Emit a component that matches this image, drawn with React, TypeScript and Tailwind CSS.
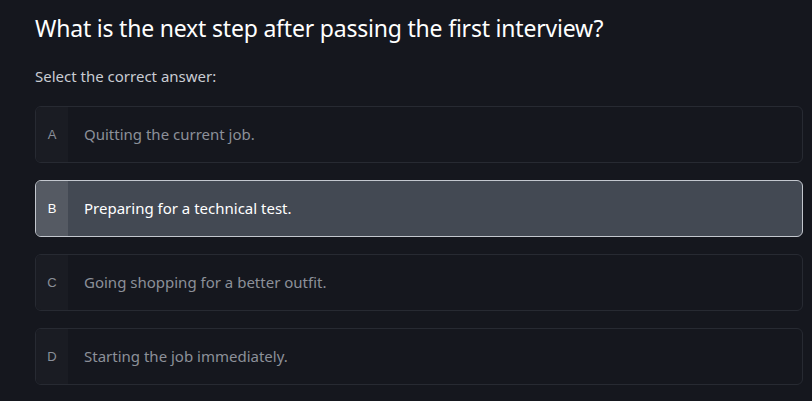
import React from "react";

const options = [
  { key: "A", text: "Quitting the current job." },
  { key: "B", text: "Preparing for a technical test." },
  { key: "C", text: "Going shopping for a better outfit." },
  { key: "D", text: "Starting the job immediately." },
];

function App() {
  const selected = "B";

  return (
    <div className="min-h-screen w-full bg-[#15171e] pl-[35px] pr-[9px] pt-[13px] font-['Noto_Sans',sans-serif]">
      <h1 className="text-[23px] leading-[30px] text-white tracking-[-0.2px]">
        What is the next step after passing the first interview?
      </h1>
      <p className="mt-[23px] text-[15px] leading-[20px] text-[#c9ccd3]">Select the correct answer:</p>

      <div className="mt-[20px] flex flex-col gap-[17px]">
        {options.map((o) => {
          const active = o.key === selected;
          return (
            <div
              key={o.key}
              className={
                active
                  ? "flex h-[57px] overflow-hidden rounded-[6px] border border-[#c3c7ce] bg-[#434953]"
                  : "flex h-[57px] overflow-hidden rounded-[6px] border border-[#272a32] bg-[#15171e]"
              }
            >
              <div
                className={
                  active
                    ? "flex w-[32px] items-center justify-center bg-[#555a63] font-['Liberation_Sans',sans-serif] text-[13px] text-white"
                    : "flex w-[32px] items-center justify-center bg-[#1a1c23] font-['Liberation_Sans',sans-serif] text-[13px] text-[#8a8f99]"
                }
              >
                {o.key}
              </div>
              <div
                className={
                  active
                    ? "flex items-center pl-[16px] text-[15px] text-white"
                    : "flex items-center pl-[16px] text-[15px] text-[#8c9099]"
                }
              >
                {o.text}
              </div>
            </div>
          );
        })}
      </div>
    </div>
  );
}

export default App;
